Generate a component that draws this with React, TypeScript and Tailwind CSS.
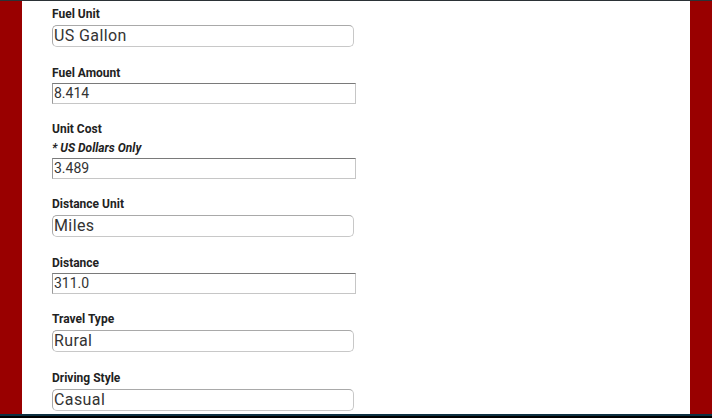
import React from "react";

const font = { fontFamily: "Roboto, 'Noto Sans', sans-serif" };

function Label({ children }: { children: React.ReactNode }) {
  return <div className="h-4 text-[12px] font-bold leading-[18px] text-[#222]">{children}</div>;
}

function SelectBox({ value }: { value: string }) {
  return (
    <div className="mt-[4px] mb-[17px] flex h-[22px] w-[302px] items-center rounded-[5px] border border-[#c8c8c8] border-t-[#a9a9a9] border-l-[#a9a9a9] pl-[1px] text-[16px] tracking-[0.4px] text-[#333]">
      {value}
    </div>
  );
}

function TextBox({ value }: { value: string }) {
  return (
    <div className="mt-[3px] mb-[16px] flex h-[21px] w-[304px] items-center border border-[#c6c6c6] border-t-[#7a7a7a] border-l-[#9a9a9a] pl-[1px] text-[14px] text-[#333]">
      {value}
    </div>
  );
}

export default function App() {
  return (
    <div className="flex h-[418px] w-[712px] flex-col overflow-hidden bg-black" style={font}>
      <div className="h-[1px] bg-[#2b3236]" />
      <div className="flex h-[413px] overflow-hidden">
        <div className="w-[22px] bg-[#990000]" />
        <div className="flex-1 overflow-hidden bg-white pl-[30px] pt-[4px]">
          <Label>Fuel Unit</Label>
          <SelectBox value="US Gallon" />
          <Label>Fuel Amount</Label>
          <TextBox value="8.414" />
          <Label>Unit Cost</Label>
          <div className="mt-[3px] h-4 text-[12px] font-bold italic leading-[18px] text-[#222]">* US Dollars Only</div>
          <TextBox value="3.489" />
          <Label>Distance Unit</Label>
          <SelectBox value="Miles" />
          <Label>Distance</Label>
          <TextBox value="311.0" />
          <Label>Travel Type</Label>
          <SelectBox value="Rural" />
          <Label>Driving Style</Label>
          <SelectBox value="Casual" />
        </div>
        <div className="w-[22px] bg-[#990000]" />
      </div>
      <div className="h-[2px] bg-[#0e3142]" />
      <div className="h-[2px] bg-black" />
    </div>
  );
}
